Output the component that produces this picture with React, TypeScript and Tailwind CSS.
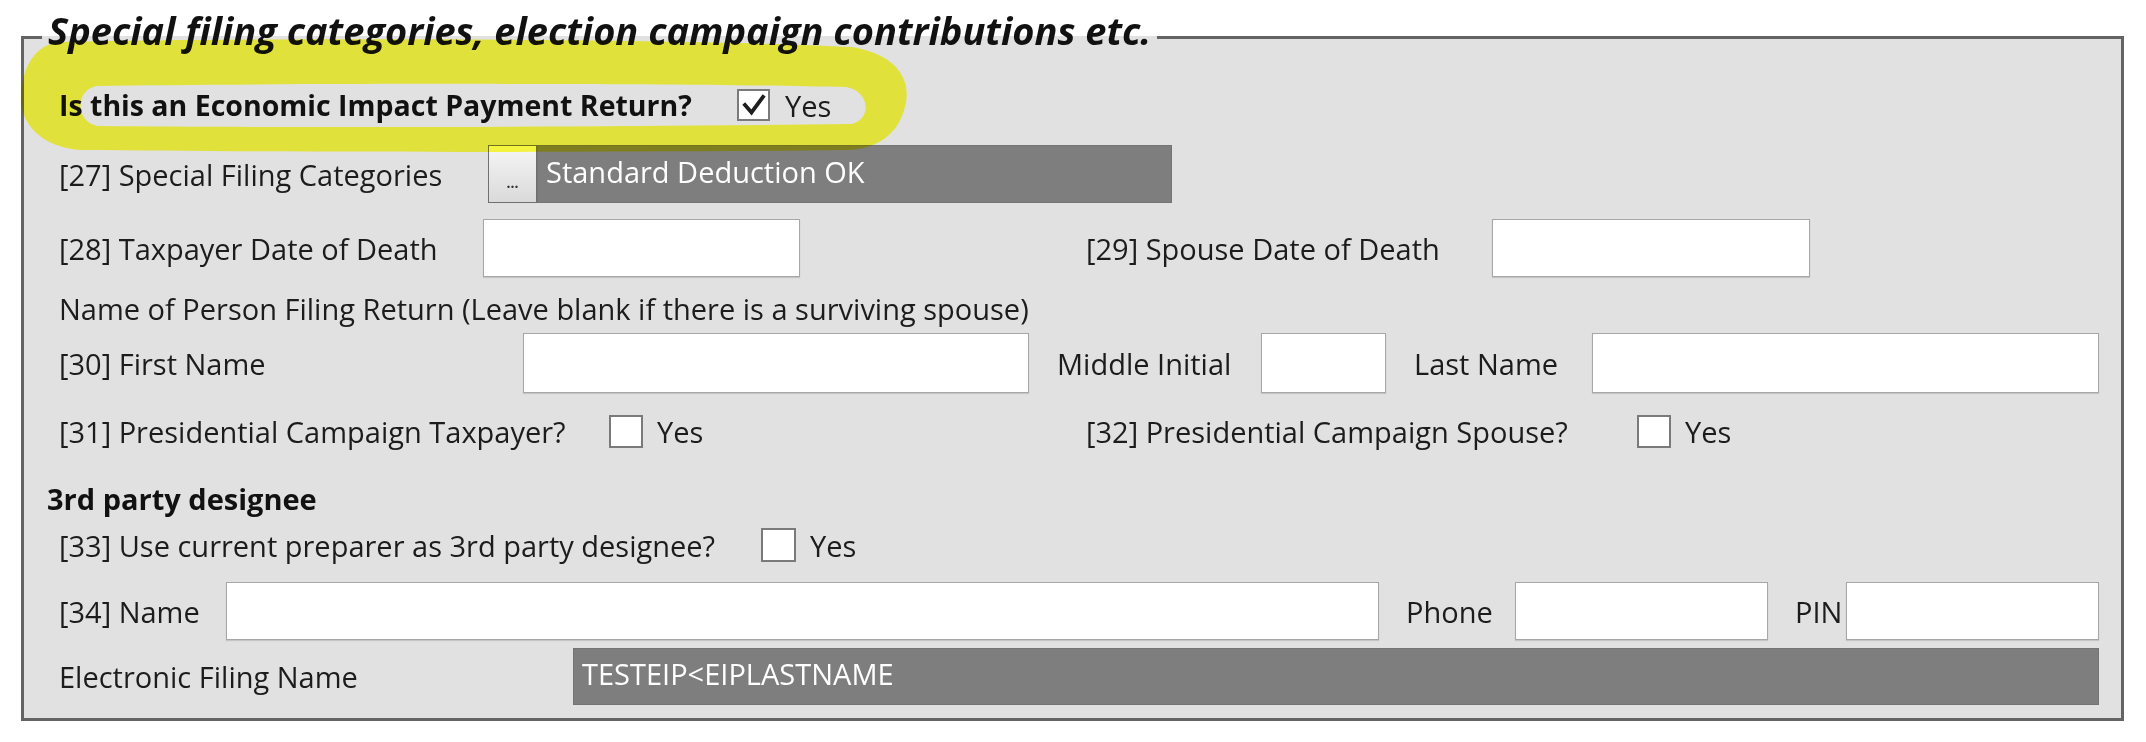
import React from 'react';

const label = 'text-[29px] leading-none text-[#1c1c1c] whitespace-nowrap shrink-0';

const TextBox = ({ w, h = 58 }: { w: number; h?: number }) => (
  <div
    className="shrink-0 bg-white border border-[#a7a7a7] shadow-[0_1px_1px_rgba(0,0,0,0.12)]"
    style={{ width: w, height: h }}
  />
);

const ReadOnlyBox = ({ w, h = 58, value }: { w: number; h?: number; value: string }) => (
  <div
    className="shrink-0 flex items-center pl-[8px] pb-[6px] bg-[#7e7e7e] border border-[#747474] text-white text-[29px] leading-none whitespace-nowrap"
    style={{ width: w, height: h }}
  >
    {value}
  </div>
);

const CheckBox = ({ checked = false, w = 34, h = 33 }: { checked?: boolean; w?: number; h?: number }) => (
  <div
    className="shrink-0 flex items-center justify-center bg-white border-[2px] border-[#7a7a7a]"
    style={{ width: w, height: h }}
  >
    {checked && (
      <svg width="24" height="22" viewBox="0 0 24 22">
        <path d="M3 11 L9.5 18.5 L21 3" fill="none" stroke="#1e1e1e" strokeWidth="3.8" strokeLinecap="square" />
      </svg>
    )}
  </div>
);

const Highlight = () => (
  <svg
    className="absolute left-0 top-0 pointer-events-none mix-blend-multiply"
    width="2146"
    height="742"
    viewBox="0 0 2146 742"
  >
    <path
      fillRule="evenodd"
      fill="#ffff42"
      d="M60 42 C300 37 700 39 852 47 C898 55 910 80 906 102 C901 130 882 148 850 150 C600 153 300 152 80 150 C40 147 19 122 21 95 C23 62 38 44 60 42 Z
         M96 86 C300 83 700 83 846 87 C870 91 872 119 852 124 C600 127 300 128 98 126 C76 123 74 91 96 86 Z"
    />
  </svg>
);

export default function App() {
  return (
    <div className="relative w-[2146px] h-[742px] bg-white pt-[11px] font-['Open_Sans',sans-serif] overflow-hidden">
      <fieldset className="ml-[21px] mr-[22px] min-w-0 border-[3px] border-[#646464] bg-[#e1e1e1] pb-[13px]">
        <legend className="ml-[18px] px-[6px] pb-[15px] text-[38px] leading-none font-bold italic text-[#111] whitespace-nowrap">
          Special filing categories, election campaign contributions etc.
        </legend>

        <div className="flex flex-col pl-[35px] pt-[24px]">
          {/* EIP */}
          <div className="flex items-center h-[34px]">
            <span className="w-[678px] shrink-0 text-[28.5px] leading-none font-bold text-[#111] whitespace-nowrap">
              Is this an Economic Impact Payment Return?
            </span>
            <CheckBox checked w={33} h={32} />
            <span className={`${label} pl-[15px]`}>Yes</span>
          </div>

          {/* 27 */}
          <div className="flex items-center h-[58px] mt-[23px]">
            <span className={`${label} w-[429px]`}>[27] Special Filing Categories</span>
            <button className="shrink-0 w-[49px] h-[58px] flex items-end justify-center pb-[12px] bg-gradient-to-b from-[#f6f6f6] to-[#dadada] border border-[#707070] text-[14px] leading-none font-bold text-[#333]">
              ...
            </button>
            <ReadOnlyBox w={635} value="Standard Deduction OK" />
          </div>

          {/* 28 / 29 */}
          <div className="flex items-center h-[58px] mt-[16px]">
            <span className={`${label} w-[424px]`}>[28] Taxpayer Date of Death</span>
            <TextBox w={317} />
            <div className="w-[286px] shrink-0" />
            <span className={`${label} w-[406px]`}>[29] Spouse Date of Death</span>
            <TextBox w={318} />
          </div>

          <div className="flex items-center h-[32px] mt-[15px]">
            <span className={label}>Name of Person Filing Return (Leave blank if there is a surviving spouse)</span>
          </div>

          {/* 30 */}
          <div className="flex items-center h-[60px] mt-[9px]">
            <span className={`${label} w-[464px]`}>[30] First Name</span>
            <TextBox w={506} h={60} />
            <span className={`${label} w-[232px] pl-[28px]`}>Middle Initial</span>
            <TextBox w={125} h={60} />
            <span className={`${label} w-[206px] pl-[28px]`}>Last Name</span>
            <TextBox w={507} h={60} />
          </div>

          {/* 31 / 32 */}
          <div className="flex items-center h-[34px] mt-[21px]">
            <span className={`${label} w-[550px]`}>[31] Presidential Campaign Taxpayer?</span>
            <CheckBox />
            <span className={`${label} w-[443px] pl-[14px]`}>Yes</span>
            <span className={`${label} w-[551px]`}>[32] Presidential Campaign Spouse?</span>
            <CheckBox />
            <span className={`${label} pl-[14px]`}>Yes</span>
          </div>

          {/* 3rd party */}
          <div className="flex items-center h-[32px] mt-[34px] -ml-[12px]">
            <span className="text-[29px] leading-none font-bold text-[#111] whitespace-nowrap">3rd party designee</span>
          </div>

          {/* 33 */}
          <div className="flex items-center h-[34px] mt-[14px]">
            <span className={`${label} w-[702px]`}>[33] Use current preparer as 3rd party designee?</span>
            <CheckBox w={35} h={34} />
            <span className={`${label} pl-[14px]`}>Yes</span>
          </div>

          {/* 34 */}
          <div className="flex items-center h-[58px] mt-[20px]">
            <span className={`${label} w-[167px]`}>[34] Name</span>
            <TextBox w={1153} />
            <span className={`${label} w-[136px] pl-[27px]`}>Phone</span>
            <TextBox w={253} />
            <span className={`${label} w-[78px] pl-[27px]`}>PIN</span>
            <TextBox w={253} />
          </div>

          {/* EFN */}
          <div className="flex items-center h-[57px] mt-[8px]">
            <span className={`${label} w-[514px]`}>Electronic Filing Name</span>
            <ReadOnlyBox w={1526} h={57} value="TESTEIP<EIPLASTNAME" />
          </div>
        </div>
      </fieldset>

      <Highlight />
    </div>
  );
}
